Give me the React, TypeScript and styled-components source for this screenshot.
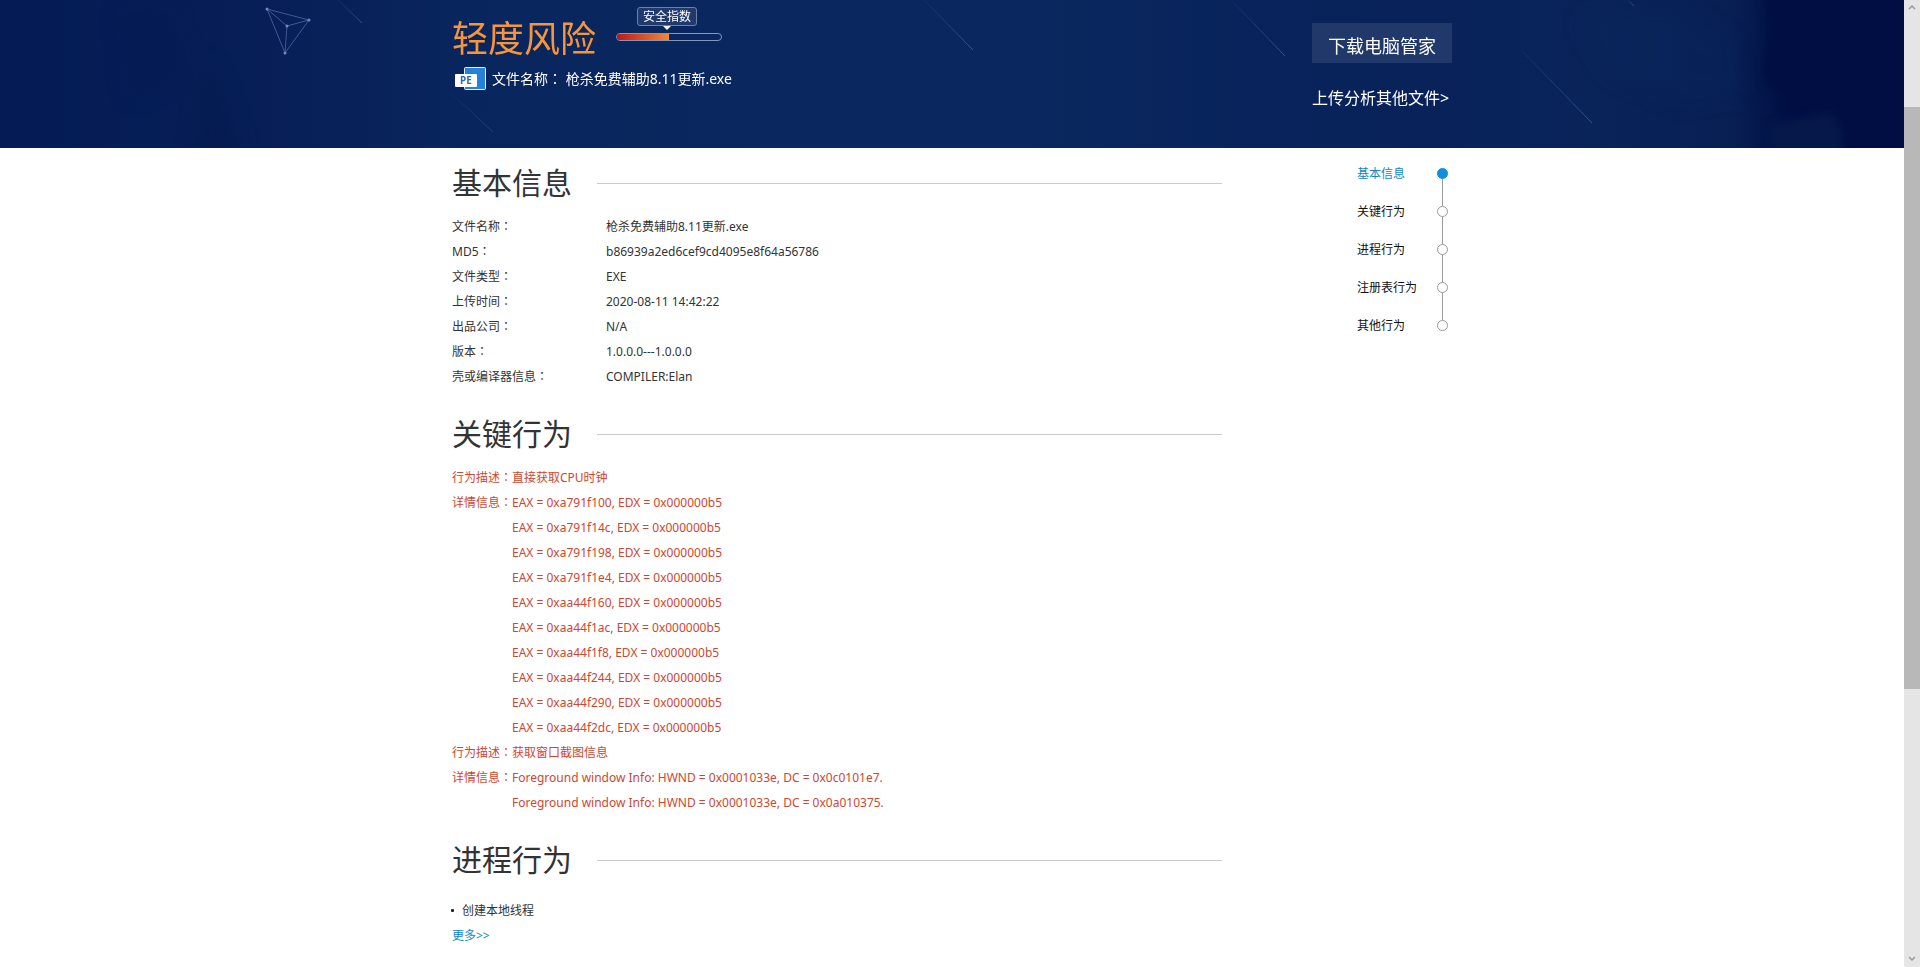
import React from 'react';
import styled, { createGlobalStyle } from 'styled-components';

const Global = createGlobalStyle`
  *, *::before, *::after { box-sizing: border-box; }
  body {
    margin: 0;
    background: #fff;
    color: #333;
    font: 12px/25px "Noto Sans", "Noto Sans CJK SC", sans-serif;
  }
  h1, h2, ul, ol, dl, dd, dt { margin: 0; padding: 0; font-weight: 400; }
  ul, ol { list-style: none; }
  a { color: inherit; text-decoration: none; }
`;

const Window = styled.div`
  display: flex;
  height: 100vh;
`;

const Page = styled.div`
  flex: 1;
  min-width: 0;
  overflow: hidden;
`;

const Banner = styled.header`
  position: relative;
  padding: 0 16px 38px;
  background: linear-gradient(90deg, #041b55 0%, #071f56 14%, #09255d 24%, #0a285f 50%, #08225a 72%, #092459 84%, #081f54 91%, #000f44 94%, #000e42 100%);
  color: #fff;
`;

const Backdrop = styled.svg`
  position: absolute;
  inset: 0;
  width: 100%;
  height: 100%;
`;

const Container = styled.div`
  position: relative;
  display: flex;
  justify-content: space-between;
  max-width: 1000px;
  margin: 0 auto;
`;

const Verdict = styled.div`
  display: flex;
  align-items: flex-start;
  gap: 20px;
`;

const RiskTitle = styled.h1`
  padding-top: 15px;
  color: #f7953b;
  font-size: 36px;
  line-height: 48px;
`;

const Gauge = styled.div`
  display: flex;
  flex-direction: column;
  align-items: flex-start;
  width: 106px;
  padding-top: 7px;
`;

const GaugeLabel = styled.span`
  position: relative;
  width: 60px;
  height: 19px;
  margin: 0 0 7px 21px;
  border: 1px solid #6d80a8;
  border-radius: 3px;
  background: #203a6e;
  font-size: 12px;
  line-height: 17px;
  text-align: center;
  white-space: nowrap;

  &::after {
    content: "";
    position: absolute;
    top: 18px;
    left: 25px;
    border: 4px solid transparent;
    border-top-color: #fff;
    border-bottom: 0;
  }
`;

const GaugeTrack = styled.div`
  width: 100%;
  height: 8px;
  border: 1px solid #8794bd;
  border-radius: 4px;
  overflow: hidden;
`;

const GaugeFill = styled.div`
  height: 100%;
  background: linear-gradient(90deg, #b91a1d, #f08a35);
`;

const FileLine = styled.div`
  display: flex;
  align-items: center;
  gap: 6px;
  padding: 2px 0 0 3px;
  font-size: 14px;
  line-height: 28px;
`;

const Colon = styled.span`
  font-family: "Noto Sans CJK TC", sans-serif;
  line-height: 1;
`;

const Actions = styled.div`
  display: flex;
  flex-direction: column;
  align-items: flex-start;
  gap: 23px;
  padding-top: 23px;
`;

const DownloadButton = styled.button`
  height: 40px;
  padding: 6px 16px 0;
  border: 0;
  background: #20386a;
  color: #fff;
  font: inherit;
  font-size: 18px;
  line-height: 32px;
  cursor: pointer;
`;

const UploadLink = styled.a`
  font-size: 16px;
  line-height: 24px;
`;

const Sections = styled.main`
  flex: 0 1 770px;
  padding-top: 15px;
`;

const Section = styled.section`
  margin-bottom: 25px;
`;

const SectionTitle = styled.h2`
  display: flex;
  align-items: center;
  gap: 25px;
  margin-bottom: 11px;
  font-size: 30px;
  line-height: 40px;

  &::after {
    content: "";
    flex: 1;
    height: 1px;
    background: #ccc;
  }
`;

const Table = styled.table`
  border-collapse: collapse;
`;

const LabelCell = styled.th`
  width: 154px;
  padding: 0;
  font-weight: 400;
  text-align: left;
`;

const ValueCell = styled.td`
  padding: 0;
`;

const Behaviour = styled.dl`
  display: grid;
  grid-template-columns: 60px 1fr;
  color: #cf4630;
`;

const BehaviourLabel = styled.dt`
  white-space: nowrap;
`;

const ProcessList = styled.ul`
  padding-top: 7px;
`;

const ProcessItem = styled.li`
  display: flex;
  align-items: center;
  gap: 8px;

  &::before {
    content: "";
    width: 3px;
    height: 3px;
    margin-left: -1px;
    border-radius: 1px;
    background: #222;
  }
`;

const MoreLink = styled.a`
  color: #0e88c8;
`;

const Steps = styled.nav`
  padding: 12px 4px 0 0;
`;

const Step = styled.li<{ $active: boolean }>`
  position: relative;
  display: flex;
  align-items: center;
  justify-content: space-between;
  width: 91px;
  height: 38px;
  margin-top: ${p => (p.$active ? '-6px' : '0')};
  color: ${p => (p.$active ? '#0e88c8' : '#111')};

  &::after {
    content: "";
    width: 11px;
    height: 11px;
    border: 1px solid ${p => (p.$active ? '#108ee0' : '#999')};
    border-radius: 50%;
    background: ${p => (p.$active ? '#108ee0' : '#fff')};
  }

  &:not(:last-child)::before {
    content: "";
    position: absolute;
    right: 5px;
    top: 25px;
    height: 27px;
    width: 1px;
    background: #999;
  }
`;

const ScrollTrack = styled.div`
  display: flex;
  flex-direction: column;
  flex: 0 0 16px;
  background: #e5e5e5;
`;

const ScrollSpace = styled.div<{ $share: number }>`
  flex: ${p => p.$share} 1 0;
`;

const ScrollThumb = styled.div`
  flex: 582 1 0;
  background: #b8b8b8;
`;

const ScrollArrow = styled.svg`
  display: block;
  width: 16px;
  height: 16px;
`;

const basics = [
  ['文件名称', '枪杀免费辅助8.11更新.exe'],
  ['MD5', 'b86939a2ed6cef9cd4095e8f64a56786'],
  ['文件类型', 'EXE'],
  ['上传时间', '2020-08-11 14:42:22'],
  ['出品公司', 'N/A'],
  ['版本', '1.0.0.0---1.0.0.0'],
  ['壳或编译器信息', 'COMPILER:Elan'],
];

const behaviours = [
  {
    summary: '直接获取CPU时钟',
    details: ['a791f100', 'a791f14c', 'a791f198', 'a791f1e4', 'aa44f160', 'aa44f1ac', 'aa44f1f8', 'aa44f244', 'aa44f290', 'aa44f2dc']
      .map(v => `EAX = 0x${v}, EDX = 0x000000b5`),
  },
  {
    summary: '获取窗口截图信息',
    details: ['0x0c0101e7', '0x0a010375'].map(v => `Foreground window Info: HWND = 0x0001033e, DC = ${v}.`),
  },
];

const steps = ['基本信息', '关键行为', '进程行为', '注册表行为', '其他行为'];

const BannerArt = () => (
  <Backdrop viewBox="0 0 1904 148" preserveAspectRatio="xMidYMid slice" aria-hidden="true">
    <defs>
      <filter id="soft" x="-50%" y="-50%" width="200%" height="200%" colorInterpolationFilters="sRGB">
        <feGaussianBlur stdDeviation="10" />
      </filter>
      <filter id="edge" x="-50%" y="-50%" width="200%" height="200%" colorInterpolationFilters="sRGB">
        <feGaussianBlur stdDeviation="5" />
      </filter>
      <linearGradient id="streak" x1="0" y1="0" x2="1" y2="1">
        <stop offset="0" stopColor="#4470a8" stopOpacity="0.1" />
        <stop offset="1" stopColor="#5c8ac0" stopOpacity="0.5" />
      </linearGradient>
    </defs>
    <g filter="url(#soft)">
      <path d="M205 60l14 30 25 70h-52l8-25z" fill="#041a50" opacity="0.7" />
      <path d="M120 10h50l20 60-60 30z" fill="#041a52" opacity="0.4" />
      <path d="M1580 20l90-18 60 40 10 50-60 10-70-30z" fill="#0a275e" opacity="0.35" />
    </g>
    <path d="M1762-20h160v190h-75l-12-40-42-20-30-35 6-50z" fill="#000e43" filter="url(#edge)" />
    <path d="M1770 125l60-14 12 18v30h-70z" fill="#081b4b" opacity="0.8" filter="url(#edge)" />
    <g stroke="url(#streak)" strokeWidth="1" fill="none">
      <path d="M338 0l24 23" />
      <path d="M450 92l43 40" opacity="0.6" />
      <path d="M924 0l49 50" />
      <path d="M1231 0l54 56" />
      <path d="M1521 50l71 73" />
      <path d="M1628 0l6 6" />
    </g>
    <path d="M267 9l42 11-24 33-18-44 20 17-2 27M287 26l22-6" fill="none" stroke="#4d68a8" strokeWidth="1" opacity="0.8" />
    <g fill="#7188c4">
      <circle cx="267" cy="9" r="1.5" />
      <circle cx="309" cy="20" r="1.5" />
      <circle cx="287" cy="26" r="1.5" />
      <circle cx="285" cy="53" r="1.5" />
    </g>
  </Backdrop>
);

const FileIcon = () => (
  <svg width="31" height="24" viewBox="0 0 31 24" aria-hidden="true">
    <rect x="9.5" y="0.5" width="21" height="22" rx="1" fill="#2582d8" stroke="#e8f3ff" />
    <rect x="0" y="7" width="22" height="13" rx="1" fill="#fff" />
    <text x="11" y="17" textAnchor="middle" fontFamily="Noto Sans, sans-serif" fontSize="10" fontWeight="700" fill="#2a6db0">PE</text>
  </svg>
);

export default function App() {
  return (
    <>
      <Global />
      <Window>
        <Page>
          <Banner>
            <BannerArt />
            <Container>
              <div>
                <Verdict>
                  <RiskTitle>轻度风险</RiskTitle>
                  <Gauge>
                    <GaugeLabel>安全指数</GaugeLabel>
                    <GaugeTrack>
                      <GaugeFill style={{ width: '50%' }} />
                    </GaugeTrack>
                  </Gauge>
                </Verdict>
                <FileLine>
                  <FileIcon />
                  <span>文件名称<Colon>：</Colon> 枪杀免费辅助8.11更新.exe</span>
                </FileLine>
              </div>
              <Actions>
                <DownloadButton type="button">下载电脑管家</DownloadButton>
                <UploadLink href="#upload">上传分析其他文件&gt;</UploadLink>
              </Actions>
            </Container>
          </Banner>
          <Container>
            <Sections>
              <Section>
                <SectionTitle>基本信息</SectionTitle>
                <Table>
                  <tbody>
                    {basics.map(([label, value]) => (
                      <tr key={label}>
                        <LabelCell scope="row">{label}<Colon>：</Colon></LabelCell>
                        <ValueCell>{value}</ValueCell>
                      </tr>
                    ))}
                  </tbody>
                </Table>
              </Section>
              <Section>
                <SectionTitle>关键行为</SectionTitle>
                {behaviours.map(b => (
                  <Behaviour key={b.summary}>
                    <BehaviourLabel>行为描述<Colon>：</Colon></BehaviourLabel>
                    <dd>{b.summary}</dd>
                    <BehaviourLabel>详情信息<Colon>：</Colon></BehaviourLabel>
                    <dd>
                      {b.details.map(d => (
                        <div key={d}>{d}</div>
                      ))}
                    </dd>
                  </Behaviour>
                ))}
              </Section>
              <Section>
                <SectionTitle>进程行为</SectionTitle>
                <ProcessList>
                  <ProcessItem>创建本地线程</ProcessItem>
                </ProcessList>
                <MoreLink href="#more">更多&gt;&gt;</MoreLink>
              </Section>
            </Sections>
            <Steps>
              <ol>
                {steps.map((s, i) => (
                  <Step key={s} $active={i === 0}>
                    <a href={`#step-${i + 1}`}>{s}</a>
                  </Step>
                ))}
              </ol>
            </Steps>
          </Container>
        </Page>
        <ScrollTrack aria-hidden="true">
          <ScrollArrow viewBox="0 0 16 16">
            <path d="M5 9l3-3 3 3" fill="none" stroke="#999" strokeWidth="1.5" />
          </ScrollArrow>
          <ScrollSpace $share={91} />
          <ScrollThumb />
          <ScrollSpace $share={262} />
          <ScrollArrow viewBox="0 0 16 16">
            <path d="M5 6l3 3 3-3" fill="none" stroke="#999" strokeWidth="1.5" />
          </ScrollArrow>
        </ScrollTrack>
      </Window>
    </>
  );
}
